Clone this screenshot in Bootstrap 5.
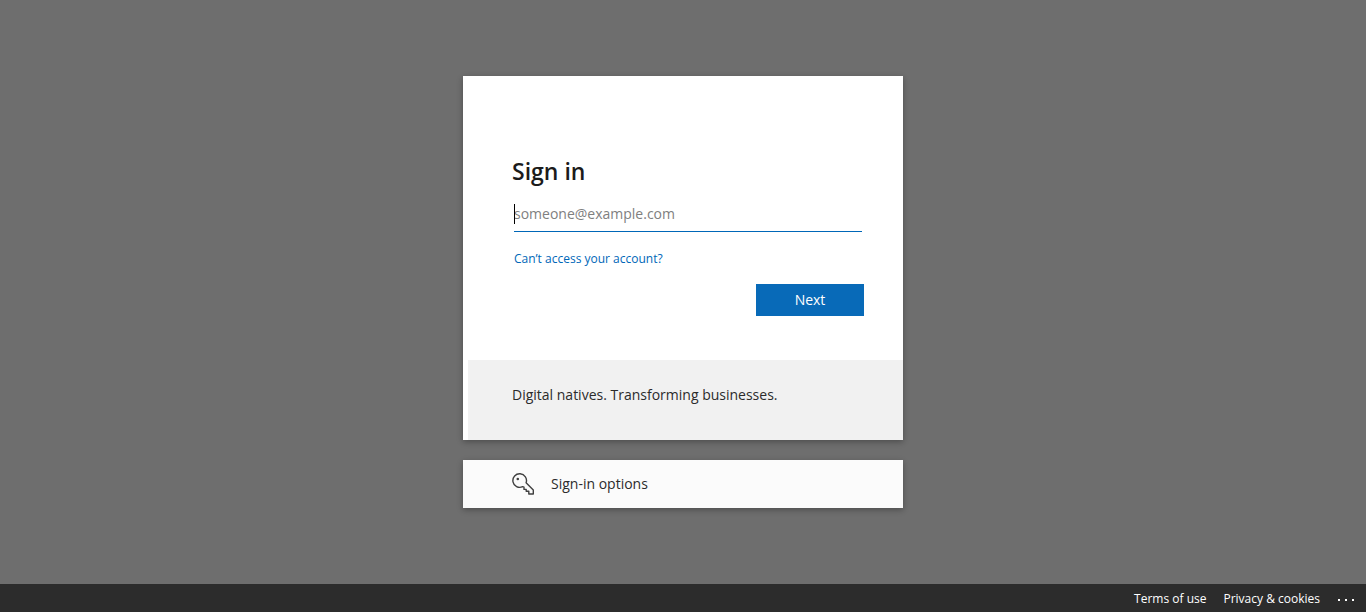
<!DOCTYPE html>
<html lang="en">
<head>
<meta charset="utf-8">
<meta name="viewport" content="width=device-width, initial-scale=1">
<title>Sign in</title>
<link rel="stylesheet" href="https://cdn.jsdelivr.net/npm/bootstrap@5.3.0/dist/css/bootstrap.min.css">
<style>
body { font-family: "Open Sans", "Noto Sans", sans-serif; font-size: 14px; line-height: 20px; color: #2b2b2b; background: #6e6e6e; }
.panel { width: 100%; max-width: 440px; box-shadow: 0 2px 6px rgba(0,0,0,.3); }
.sign-form { padding: 80px 39px 44px 49px; }
.sign-title { font-size: 23px; line-height: 30px; font-weight: 600; padding-bottom: 2px; color: #1b1b1b; }
.field { margin: 8px 2px 0; }
.field input { height: 36px; border-bottom: 1px solid #0067b8; font-size: 14px; color: #1b1b1b; }
.field input:focus { box-shadow: none; border-color: #0067b8; }
.field input::placeholder { color: #808080; opacity: 1; }
.text-caret { left: 0; top: 8px; width: 1px; height: 20px; background: #000; }
.help-link { font-size: 12px; color: #0067b8; margin: 17px 2px 15px; }
.btn-next { width: 108px; height: 32px; background: #086ab8; font-size: 14px; line-height: 20px; }
.btn-next:hover { background: #005da6; }
.note { margin-left: 5px; padding: 25px 44px 35px; background: #f1f1f1; }
.options { height: 48px; padding: 0 49px; gap: 15px; background: #fbfbfb; font-size: 14px; line-height: 20px; color: #2b2b2b; }
.legal { height: 28px; padding: 2px 10px 0; gap: 17px; background: #2c2c2c; font-size: 12px; }
</style>
</head>
<body class="d-flex flex-column min-vh-100">
<main class="flex-grow-1 d-flex flex-column align-items-center justify-content-center">
  <section class="panel bg-white mb-3">
    <form class="sign-form">
      <h1 class="sign-title mb-0"><label for="email">Sign in</label></h1>
      <div class="field position-relative">
        <input id="email" type="email" class="form-control border-top-0 border-start-0 border-end-0 rounded-0 bg-transparent p-0" placeholder="someone@example.com">
        <span class="text-caret position-absolute" aria-hidden="true"></span>
      </div>
      <div class="help-link"><a href="#" class="text-decoration-none text-reset">Can’t access your account?</a></div>
      <div class="d-flex justify-content-end">
        <button type="submit" class="btn btn-next rounded-0 border-0 text-white p-0">Next</button>
      </div>
    </form>
    <p class="note mb-0">Digital natives. Transforming businesses.</p>
  </section>
  <button type="button" class="panel options btn border-0 rounded-0 d-flex align-items-center mt-1">
    <svg width="24" height="24" viewBox="0 0 24 24" fill="none" stroke="#404040" stroke-width="1.4" stroke-linejoin="round" aria-hidden="true">
      <path d="M14.1 10.8A6.8 6.8 0 1 0 10.6 14.7L12 15.2V17.4H14.2V19.3H16.8V22H21.3V18.1Z"/>
      <circle cx="5.8" cy="7" r="1.3" fill="#404040" stroke="none"/>
    </svg>
    <span>Sign-in options</span>
  </button>
</main>
<footer class="legal d-flex justify-content-end align-items-center">
  <a href="#" class="text-white text-decoration-none">Terms of use</a>
  <a href="#" class="text-white text-decoration-none">Privacy &amp; cookies</a>
  <button type="button" class="btn border-0 p-0 d-flex" aria-label="More options">
    <svg width="19" height="16" viewBox="0 0 19 16" fill="#fff" aria-hidden="true"><path d="M1 8h2v2H1zM8 8h2v2H8zM15 8h2v2h-2z"/></svg>
  </button>
</footer>
<script src="https://cdn.jsdelivr.net/npm/bootstrap@5.3.0/dist/js/bootstrap.bundle.min.js"></script>
</body>
</html>
